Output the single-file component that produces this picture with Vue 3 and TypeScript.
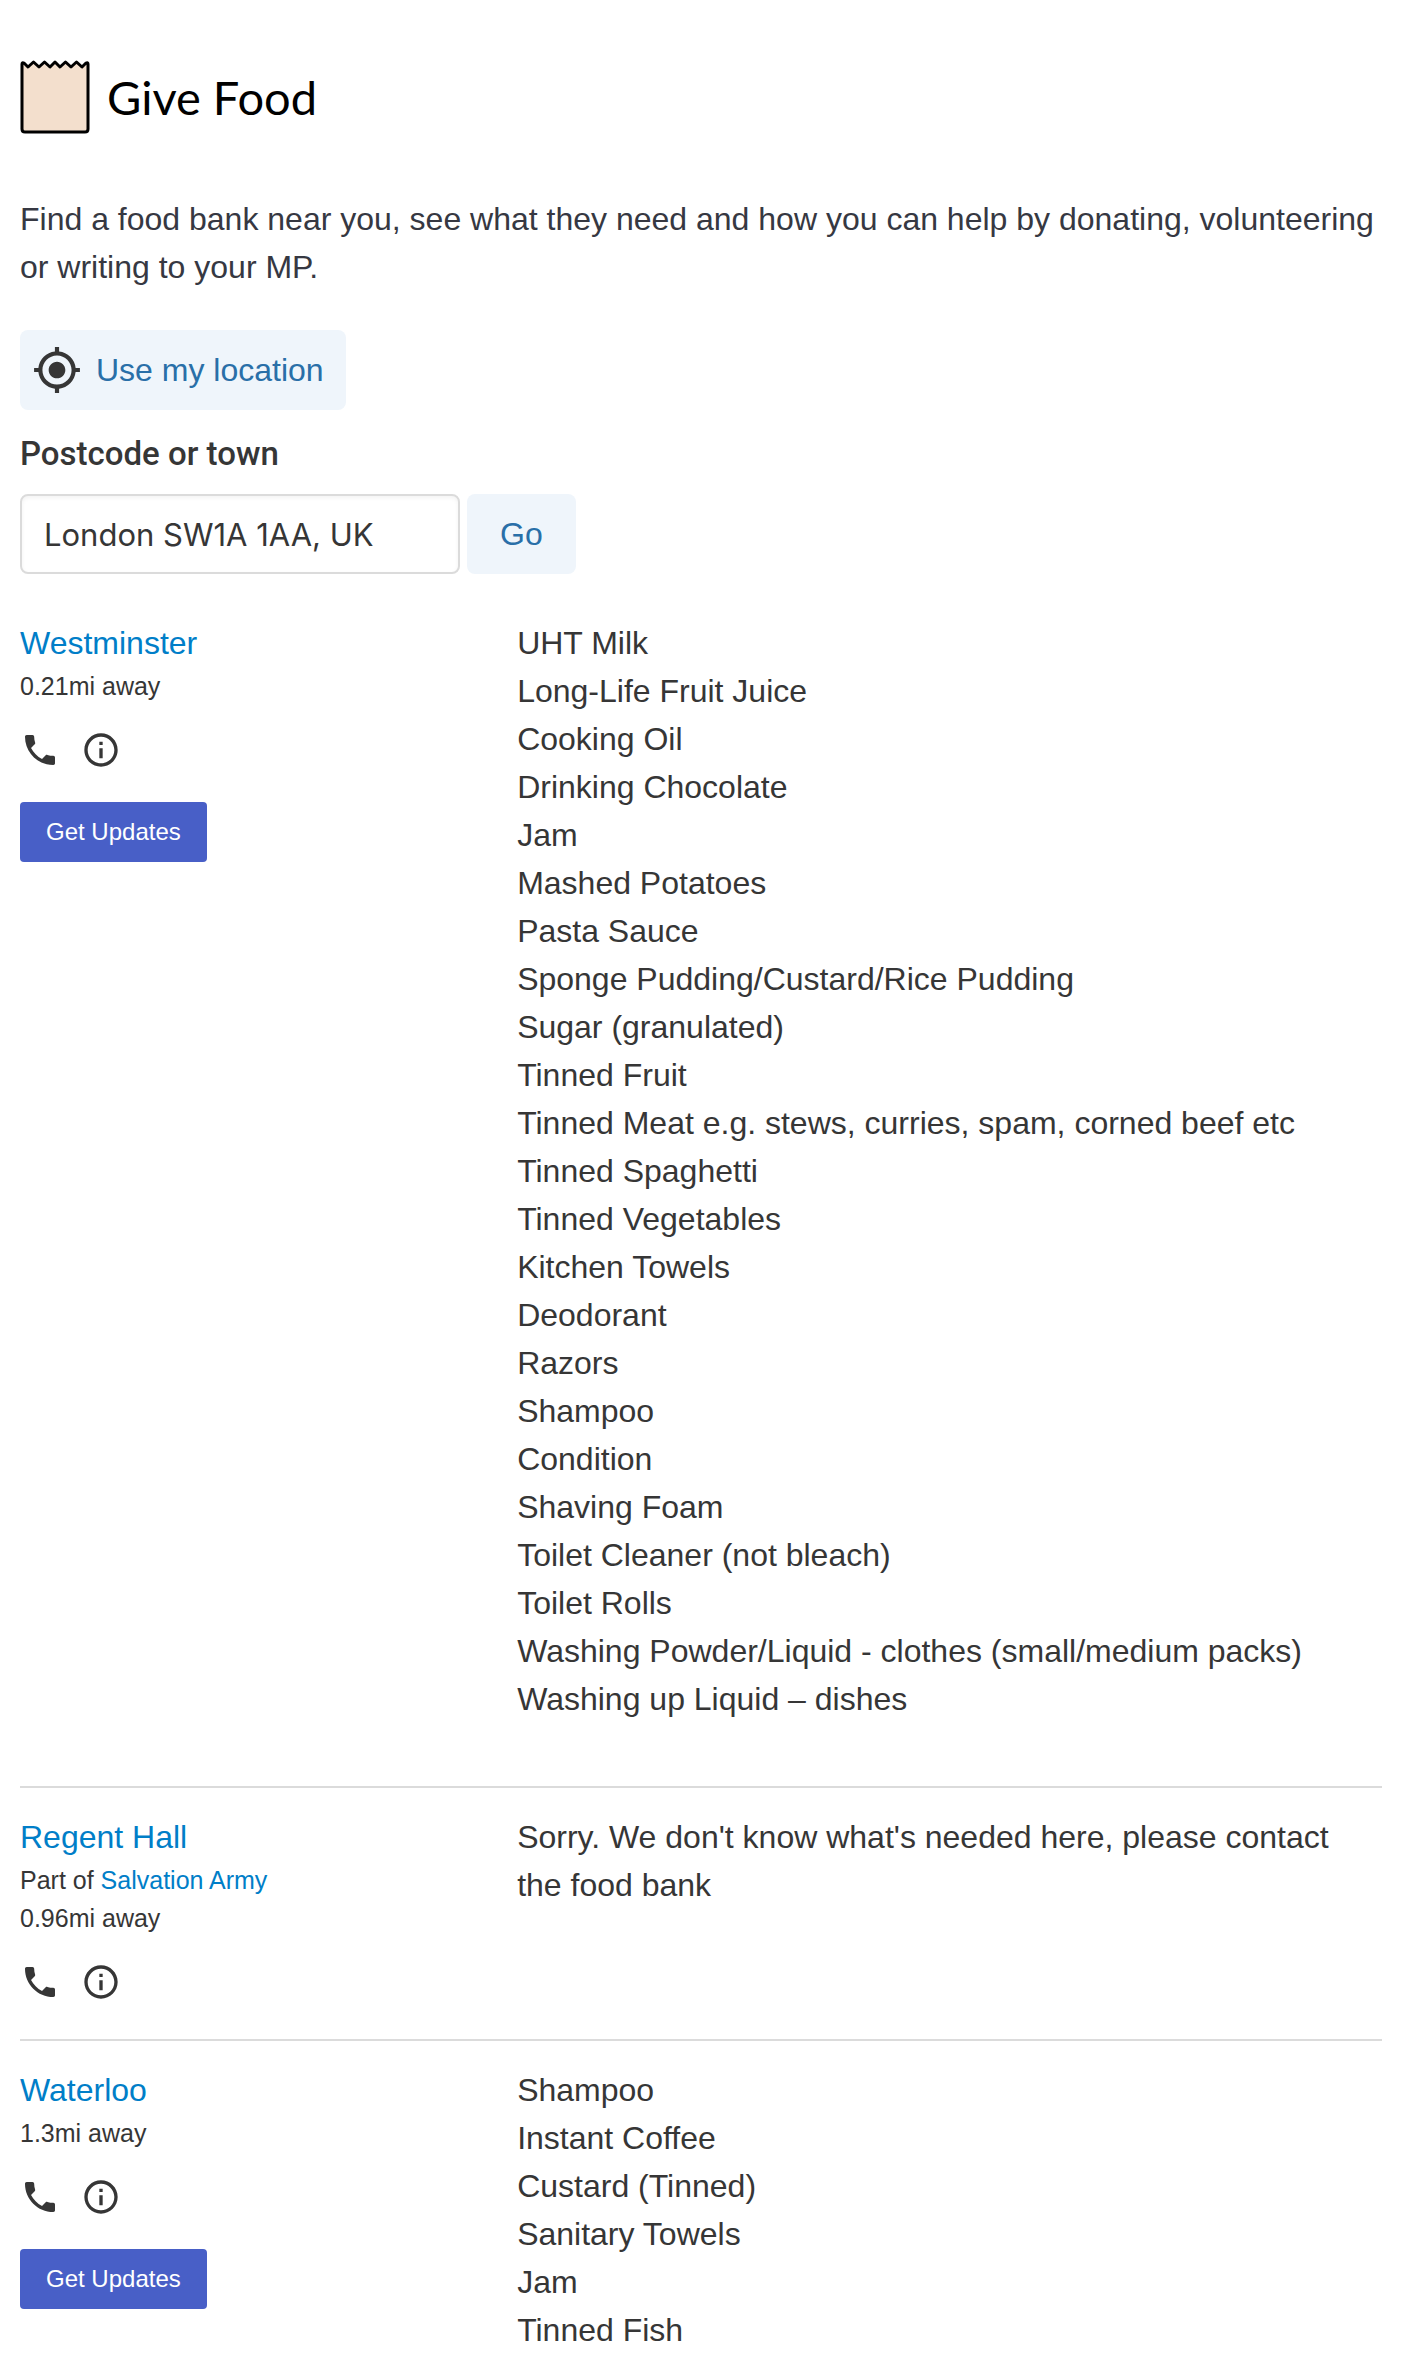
<script setup lang="ts">
import { ref } from 'vue'

interface FoodBank {
  name: string
  network?: string
  distance: string
  needs: string[]
}

const postcode = ref('London SW1A 1AA, UK')

const foodBanks: FoodBank[] = [
  {
    name: 'Westminster',
    distance: '0.21mi away',
    needs: [
      'UHT Milk',
      'Long-Life Fruit Juice',
      'Cooking Oil',
      'Drinking Chocolate',
      'Jam',
      'Mashed Potatoes',
      'Pasta Sauce',
      'Sponge Pudding/Custard/Rice Pudding',
      'Sugar (granulated)',
      'Tinned Fruit',
      'Tinned Meat e.g. stews, curries, spam, corned beef etc',
      'Tinned Spaghetti',
      'Tinned Vegetables',
      'Kitchen Towels',
      'Deodorant',
      'Razors',
      'Shampoo',
      'Condition',
      'Shaving Foam',
      'Toilet Cleaner (not bleach)',
      'Toilet Rolls',
      'Washing Powder/Liquid - clothes (small/medium packs)',
      'Washing up Liquid – dishes',
    ],
  },
  {
    name: 'Regent Hall',
    network: 'Salvation Army',
    distance: '0.96mi away',
    needs: [],
  },
  {
    name: 'Waterloo',
    distance: '1.3mi away',
    needs: ['Shampoo', 'Instant Coffee', 'Custard (Tinned)', 'Sanitary Towels', 'Jam', 'Tinned Fish'],
  },
]
</script>

<template>
  <div class="page">
    <header>
      <a class="logo" href="#">
        <svg class="bag" viewBox="0 0 70 74" aria-hidden="true">
          <path
            d="M2 69V4Q2 2 4 3L8 7L13.500 2L19 7L24.500 2L30 7L35 2L40 7L45.500 2L51 7L56.500 2L62 7L66 3Q68 2 68 4V69Q68 72 65 72H5Q2 72 2 69Z"
            fill="#f3dfcd"
            stroke="#000"
            stroke-width="3"
            stroke-linejoin="round"
          />
        </svg>
        <span>Give Food</span>
      </a>
    </header>

    <main>
      <p class="intro">
        Find a food bank near you, see what they need and how you can help by donating, volunteering or
        writing to your MP.
      </p>

      <button class="soft locate" type="button">
        <svg viewBox="0 0 24 24" aria-hidden="true">
          <path
            d="M12 8c-2.210 0-4 1.790-4 4s1.790 4 4 4 4-1.790 4-4-1.790-4-4-4zm8.940 3A8.994 8.994 0 0 0 13 3.060V1h-2v2.060A8.994 8.994 0 0 0 3.060 11H1v2h2.060A8.994 8.994 0 0 0 11 20.940V23h2v-2.060A8.994 8.994 0 0 0 20.940 13H23v-2h-2.060zM12 19c-3.870 0-7-3.130-7-7s3.130-7 7-7 7 3.130 7 7-3.130 7-7 7z"
          />
        </svg>
        Use my location
      </button>

      <form class="search" @submit.prevent>
        <label for="postcode">Postcode or town</label>
        <div class="fields">
          <input id="postcode" v-model="postcode" type="text" />
          <button class="soft" type="submit">Go</button>
        </div>
      </form>

      <section v-for="bank in foodBanks" :key="bank.name" class="bank">
        <div class="details">
          <h2><a href="#">{{ bank.name }}</a></h2>
          <p v-if="bank.network">Part of <a href="#">{{ bank.network }}</a></p>
          <p>{{ bank.distance }}</p>
          <div class="contact">
            <a href="#" aria-label="Phone">
              <svg viewBox="0 0 24 24" aria-hidden="true">
                <path
                  d="M6.620 10.790c1.440 2.830 3.760 5.140 6.590 6.590l2.200-2.200c.27-.27.67-.36 1.020-.24 1.120.37 2.330.57 3.570.57.55 0 1 .45 1 1V20c0 .55-.45 1-1 1-9.390 0-17-7.610-17-17 0-.55.45-1 1-1h3.500c.55 0 1 .45 1 1 0 1.250.2 2.450.57 3.570.11.35.03.74-.25 1.020l-2.200 2.200z"
                />
              </svg>
            </a>
            <a href="#" aria-label="Information">
              <svg viewBox="0 0 24 24" aria-hidden="true">
                <path
                  d="M11 7h2v2h-2zm0 4h2v6h-2zm1-9C6.480 2 2 6.480 2 12s4.480 10 10 10 10-4.480 10-10S17.520 2 12 2zm0 18c-4.410 0-8-3.590-8-8s3.590-8 8-8 8 3.590 8 8-3.590 8-8 8z"
                />
              </svg>
            </a>
          </div>
          <button v-if="bank.needs.length" class="updates" type="button">Get Updates</button>
        </div>
        <ul v-if="bank.needs.length" class="needs">
          <li v-for="need in bank.needs" :key="need">{{ need }}</li>
        </ul>
        <p v-else class="needs">
          Sorry. We don't know what's needed here, please contact the food bank
        </p>
      </section>
    </main>
  </div>
</template>

<style>
body {
  background: #fff;
}
</style>

<style scoped>
.page {
  padding: 60px 20px 0;
  color: #363636;
  font-family: 'Liberation Sans', Arial, sans-serif;
  font-size: 32px;
  line-height: 48px;
}

p,
h2,
ul {
  margin: 0;
  padding: 0;
}

h2 {
  font-size: 32px;
  font-weight: 400;
}

ul {
  list-style: none;
}

a {
  color: #007ec8;
  text-decoration: none;
}

svg {
  display: block;
  fill: #363636;
}

button,
input {
  box-sizing: border-box;
  margin: 0;
  border: 0;
  color: inherit;
  font: inherit;
}

.logo {
  display: flex;
  align-items: center;
  gap: 17px;
  color: #000;
  font-family: Lato, sans-serif;
  font-size: 47px;
}

.bag {
  width: 70px;
  height: 74px;
}

.intro {
  margin: 61px 0 39px;
  color: #363842;
}

.soft {
  height: 80px;
  padding: 0 33px;
  border-radius: 8px;
  background: #eff5fb;
  color: #296fa8;
}

.locate {
  display: flex;
  align-items: center;
  gap: 14px;
  padding: 0 22px 0 12px;
}

.locate svg {
  width: 50px;
  height: 50px;
}

.search {
  margin: 20px 0 45px;
}

label {
  display: block;
  margin-bottom: 16px;
  font-family: Roboto, sans-serif;
  font-size: 33px;
  font-weight: 500;
}

.fields {
  display: flex;
  gap: 7px;
}

input {
  width: 440px;
  height: 80px;
  padding: 0 22px;
  border: 2px solid #dbdbdb;
  border-radius: 8px;
  box-shadow: inset 0 2px 4px rgba(10, 10, 10, 0.05);
  font-family: Inter, sans-serif;
  font-size: 31px;
}

.bank {
  display: grid;
  grid-template-columns: 73fr 127fr;
}

.bank + .bank {
  padding-top: 25px;
  border-top: 2px solid #dbdbdb;
}

.details {
  padding-bottom: 37px;
}

.details p {
  font-size: 25px;
  line-height: 38px;
}

.contact {
  display: flex;
  gap: 21px;
  margin-top: 25px;
}

.contact svg {
  width: 40px;
  height: 40px;
}

.updates {
  height: 60px;
  margin-top: 32px;
  padding: 0 26px;
  border-radius: 4px;
  background: #485fc7;
  color: #fff;
  font-size: 24px;
}

.needs {
  padding-right: 32px;
}

ul.needs {
  padding-bottom: 63px;
}

.bank:last-child .needs {
  padding-bottom: 0;
}
</style>
